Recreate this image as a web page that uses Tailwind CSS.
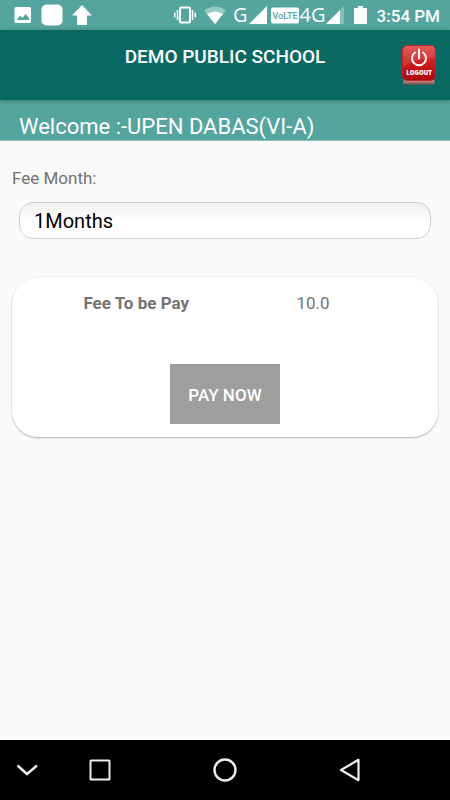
<!DOCTYPE html>
<html lang="en">
<head>
<meta charset="utf-8">
<meta name="viewport" content="width=device-width, initial-scale=1">
<title>Demo Public School</title>
<script src="https://cdn.jsdelivr.net/npm/@tailwindcss/browser@4"></script>
</head>
<body class="flex min-h-screen flex-col bg-[#fafafa] font-[Roboto,sans-serif] text-[#737373]">

<!-- Status bar -->
<div class="flex h-[30px] items-center justify-between bg-[#53a59d] pr-[10px] pl-[14px] text-white">
  <div class="flex items-center gap-[9px]">
    <svg class="h-[18px] w-[18px]" viewBox="0 0 18 18" role="img" aria-label="Picture"><path fill="#fff" fill-rule="evenodd" d="M2 1h13.500q1.500 0 1.500 1.500v13q0 1.500-1.500 1.500H2Q.5 17 .5 15.500v-13Q.5 1 2 1zM3 14h12v-2l-3.500-4-3 4-2.500-2.500z"/></svg>
    <svg class="h-[22px] w-[22px]" viewBox="0 0 22 22" aria-hidden="true"><rect x="0.500" y="0.500" width="21" height="21" rx="5" fill="#fff"/></svg>
    <svg class="h-[22px] w-[20px]" viewBox="0 0 20 22" role="img" aria-label="Upload"><path fill="#fff" d="M10 1l10 10.500h-5V21H5v-9.500H0z"/></svg>
  </div>
  <div class="flex items-center">
    <svg class="mr-2 h-[18px] w-[22px]" viewBox="0 0 22 18" role="img" aria-label="Vibrate" fill="none" stroke="#fff"><rect x="6" y="1.500" width="10" height="15" rx="1" stroke-width="2"/><path stroke-width="1.500" d="M3.500 4v10M.8 6.500v5M18.500 4v10M21.200 6.500v5"/></svg>
    <svg class="mr-[7px] h-[18px] w-[22px]" viewBox="0 0 22 18" role="img" aria-label="Wi-Fi" fill="#fff"><path fill-opacity=".4" d="M0 4.500Q11-3.500 22 4.500L11 18z"/><path d="M3 8q8-5 16 0l-8 10z"/></svg>
    <span class="mr-px font-['Open_Sans'] text-[20px] leading-[28px]">G</span>
    <svg class="mr-1 h-[18px] w-[18px]" viewBox="0 0 18 18" aria-hidden="true"><path fill="#fff" d="M18 0v18H0z"/></svg>
    <svg class="mr-px h-[18px] w-[28px]" viewBox="0 0 28 18" role="img" aria-label="VoLTE"><rect x="0" y="1.500" width="28" height="16" rx="2" fill="#fff"/><text x="14" y="13" text-anchor="middle" font-family="Roboto" font-size="9" font-weight="500" fill="#53a59d">VoLTE</text></svg>
    <span class="font-['Open_Sans'] text-[20px] leading-[28px]">4G</span>
    <svg class="mr-[10px] h-[18px] w-[18px]" viewBox="0 0 18 18" aria-hidden="true" fill="#fff"><path fill-opacity=".3" d="M18 0v18H0z"/><path d="M14 4v14H0z"/></svg>
    <svg class="mr-[10px] h-[20px] w-[13px]" viewBox="0 0 13 20" role="img" aria-label="Battery"><path fill="#fff" d="M4 1h5v2h3q1 0 1 1v14q0 1-1 1H1q-1 0-1-1V4q0-1 1-1h3z"/></svg>
    <span class="pt-0.5 text-[17px] leading-[28px] font-medium">3:54 PM</span>
  </div>
</div>

<!-- App bar -->
<header class="relative z-10 grid h-[70px] grid-cols-[1fr_auto_1fr] bg-[#086963] px-[14px] shadow-[0_1px_4px_rgba(0,0,0,0.3)]">
  <h1 class="col-start-2 pt-[14px] text-[19px] leading-[26px] font-medium text-white">DEMO PUBLIC SCHOOL</h1>
  <button type="button" aria-label="Logout" class="mt-[14px] h-[42px] w-[34px] justify-self-end">
    <svg class="h-[42px] w-[34px]" viewBox="0 0 34 42">
      <defs>
        <linearGradient id="red" x1="0" y1="0" x2="0" y2="1"><stop offset="0" stop-color="#e04a4a"/><stop offset=".45" stop-color="#d41c20"/><stop offset="1" stop-color="#a9070b"/></linearGradient>
        <linearGradient id="mirror" x1="0" y1="0" x2="0" y2="1"><stop offset="0" stop-color="#d59793"/><stop offset="1" stop-color="#79504d"/></linearGradient>
      </defs>
      <path fill="url(#mirror)" d="M2 36h30l1 3q0 1.500-2 1.500H3q-2 0-2-1.500z"/>
      <rect x="0.500" y="1.500" width="33" height="35" rx="5" fill="url(#red)" stroke="#bd2529"/>
      <path fill="#fff" fill-opacity=".1" d="M1 6q0-4 4-4h24q4 0 4 4v8Q15 14 1 23z"/>
      <path fill="none" stroke="#fff" stroke-width="2" stroke-linecap="round" d="M13 8.500a7 7 0 1 0 8 0M17 5.500v9"/>
      <text x="17" y="31" text-anchor="middle" font-family="Open Sans" font-size="6" font-weight="800" fill="#fff">LOGOUT</text>
    </svg>
  </button>
</header>

<p class="h-[41px] border-b border-[#8cc3be] bg-[#53a59d] pt-[14px] pl-[19px] text-[22px] leading-[26px] text-white">Welcome :-UPEN DABAS(VI-A)</p>

<main class="flex-1 px-3 pt-[25px]">
  <label for="month" class="block text-[17px] leading-[24px]">Fee Month:</label>
  <div class="mt-3 px-[7px]">
    <select id="month" class="block h-[37px] w-full appearance-none rounded-[14px] border border-[#cecece] bg-white bg-linear-to-b from-[#efefef] to-white to-50% pl-[14px] text-[20px] leading-[28px] text-black">
      <option>1Months</option>
    </select>
  </div>

  <section class="mt-[39px] flex flex-col items-center rounded-[26px] bg-white pt-[13px] pb-[13px] shadow-[0_1px_2px_rgba(0,0,0,0.3)]">
    <dl class="grid w-full grid-cols-[7fr_5fr] text-[17px] leading-[24px]">
      <dt class="text-center font-bold">Fee To be Pay</dt>
      <dd class="pl-9">10.0</dd>
    </dl>
    <button type="button" class="mt-[49px] h-[60px] w-[110px] bg-[#9e9e9e] pt-0.5 text-[17px] leading-[24px] font-medium text-white">PAY NOW</button>
  </section>
</main>

<!-- System navigation -->
<nav aria-label="System" class="grid h-[60px] grid-cols-[54fr_92fr_158fr_92fr_54fr] place-items-center bg-black">
  <button type="button" aria-label="Hide"><svg class="h-[24px] w-[24px]" viewBox="0 0 24 24" fill="none" stroke="#eee" stroke-width="2.500"><path d="M2.500 7.500L12 16l10-8.500"/></svg></button>
  <button type="button" aria-label="Recent apps"><svg class="h-[24px] w-[24px]" viewBox="0 0 24 24" fill="none" stroke="#eee" stroke-width="2"><rect x="2.500" y="2.500" width="19" height="19" rx="0.500"/></svg></button>
  <button type="button" aria-label="Home"><svg class="h-[24px] w-[24px]" viewBox="0 0 24 24" fill="none" stroke="#eee" stroke-width="2.400"><circle cx="12" cy="12" r="10.500"/></svg></button>
  <button type="button" aria-label="Back"><svg class="h-[24px] w-[24px]" viewBox="0 0 24 24" fill="none" stroke="#eee" stroke-width="2.200" stroke-linejoin="round"><path d="M20.500 1.800v20.400L3 12z"/></svg></button>
</nav>
</body>
</html>
